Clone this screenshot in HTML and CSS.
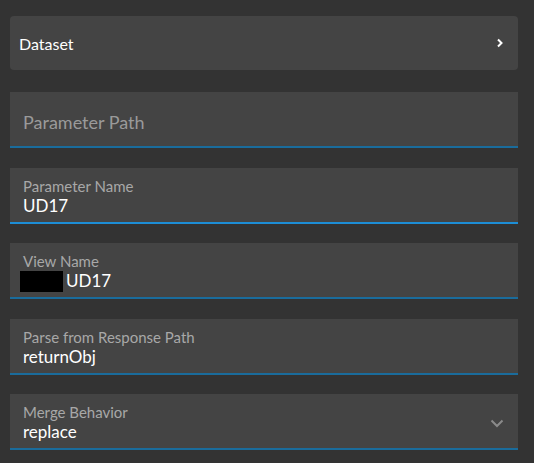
FILE: index.html
```html
<!DOCTYPE html>
<html>
<head>
<meta charset="utf-8">
<link rel="stylesheet" href="styles.css">
</head>
<body>
<div class="panel">
  <div class="card">
    <span class="card-title">Dataset</span>
    <svg class="chev-right" width="8" height="10" viewBox="0 0 8 10"><path d="M2 1.5 L5.5 5 L2 8.5" fill="none" stroke="#fff" stroke-width="2"/></svg>
  </div>
  <div class="field field-empty">
    <span class="placeholder">Parameter Path</span>
  </div>
  <div class="field focused">
    <span class="label">Parameter Name</span>
    <span class="value">UD17</span>
  </div>
  <div class="field">
    <span class="label">View Name</span>
    <span class="value"><span class="redact"></span>UD17</span>
  </div>
  <div class="field">
    <span class="label">Parse from Response Path</span>
    <span class="value">returnObj</span>
  </div>
  <div class="field select">
    <div class="select-text">
      <span class="label">Merge Behavior</span>
      <span class="value">replace</span>
    </div>
    <svg class="chev-down" width="14" height="9" viewBox="0 0 14 9"><path d="M1.5 1.5 L7 7 L12.5 1.5" fill="none" stroke="#8a8a8a" stroke-width="2"/></svg>
  </div>
</div>
</body>
</html>
```
FILE: styles.css
```css
html, body {
  margin: 0;
  padding: 0;
  background: #333333;
  font-family: Lato, "Open Sans", sans-serif;
}
.panel {
  display: flex;
  flex-direction: column;
  gap: 19.5px;
  padding: 16px 0 0 10px;
  width: 508px;
}
.card {
  background: #444444;
  border-radius: 4px;
  height: 54px;
  display: flex;
  align-items: center;
  justify-content: space-between;
  padding: 0 14px 0 9px;
  margin-bottom: 2.5px;
}
.card-title {
  color: #ffffff;
  font-size: 16px;
}
.chev-right { display: block; }
.field {
  background: #444444;
  height: 50px;
  border-bottom: 2px solid #1a6c9c;
  display: flex;
  flex-direction: column;
  justify-content: center;
  padding: 4px 13px 0;
}
.field.focused { border-bottom-color: #1d8ed6; }
.field-empty { justify-content: flex-end; }
.placeholder {
  color: #9a9a9a;
  font-size: 18px;
  margin-bottom: 13px;
}
.label {
  color: #a8a8a8;
  font-size: 15px;
  line-height: 18px;
}
.value {
  color: #ffffff;
  font-size: 17px;
  line-height: 22px;
  display: flex;
  align-items: center;
}
.redact {
  display: inline-block;
  width: 43px;
  height: 21px;
  background: #000;
  margin-left: -3px;
  margin-right: 3px;
}
.field.select {
  flex-direction: row;
  align-items: center;
  justify-content: space-between;
}
.select-text { display: flex; flex-direction: column; }
.chev-down { display: block; margin-right: 1px; margin-top: 0; }
```
